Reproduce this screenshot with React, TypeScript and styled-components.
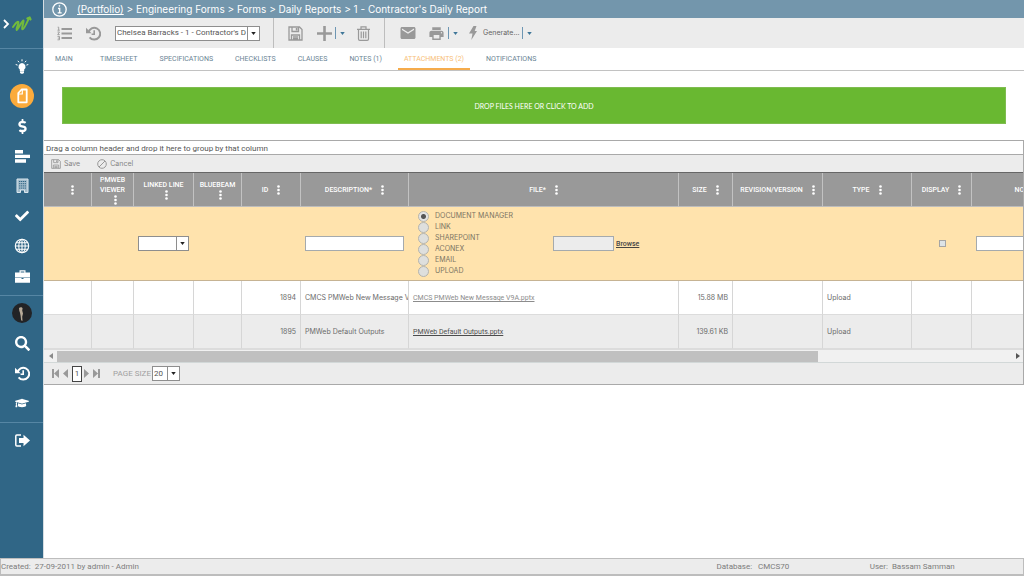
import React from "react";
import styled, { createGlobalStyle, css } from "styled-components";
import { MdEmail, MdPrint } from "react-icons/md";
import {
  FaCheck,
  FaDollarSign,
  FaGraduationCap,
  FaSearch,
} from "react-icons/fa";

const GlobalStyle = createGlobalStyle`
  *, *::before, *::after { box-sizing: border-box; }
  body {
    margin: 0;
    background: #fff;
    color: #6b6b6b;
    font-family: Roboto, "Liberation Sans", sans-serif;
    font-size: 8px;
    line-height: 10px;
  }
  button, input, select { font: inherit; color: inherit; }
  button { border: 0; padding: 0; background: none; cursor: pointer; }
  a { color: inherit; }
  svg { display: block; flex: none; }
`;

/* ---------- page frame ---------- */

const Page = styled.div`
  display: flex;
  flex-direction: column;
  min-height: 100vh;
`;

const Body = styled.div`
  display: flex;
  flex: 1;
`;

const Main = styled.main`
  flex: 1;
  min-width: 0;
  border-left: 1px solid #d5dde2;
`;

const Footer = styled.footer`
  display: flex;
  align-items: center;
  height: 18px;
  border: 1px solid #bdbdbd;
  border-bottom-width: 2px;
  background: #ececec;
  color: #7c7c7c;
`;

const FooterDatabase = styled.span`
  margin-left: auto;
  width: 15%;
  white-space: pre;
`;

const FooterUser = styled.span`
  width: 15%;
  white-space: pre;
`;

/* ---------- sidebar ---------- */

const Sidebar = styled.nav`
  width: 43px;
  flex: none;
  background: #306686;
  color: #fff;
`;

const Brand = styled.a`
  display: flex;
  align-items: center;
  height: 49px;
  padding-left: 3px;
  border-bottom: 1px solid #5686a4;
`;

const NavGroup = styled.div`
  padding: 2px 0 4px;
  border-bottom: 1px solid #5686a4;

  &:last-child { border-bottom: 0; }
`;

const NavLink = styled.a`
  display: flex;
  align-items: center;
  justify-content: center;
  height: 30px;
  padding-left: 1px;
  color: #fff;
`;

const ActiveDot = styled.span`
  display: flex;
  align-items: center;
  justify-content: center;
  width: 24px;
  height: 24px;
  border-radius: 50%;
  background: #fbab3c;
`;

/* ---------- title, toolbar, tabs ---------- */

const TitleBar = styled.header`
  display: flex;
  align-items: center;
  gap: 9px;
  height: 18px;
  padding-left: 7px;
  background: #7396ac;
  color: #fff;
`;

const Title = styled.h1`
  margin: 0;
  font-family: Inter, sans-serif;
  font-size: 10px;
  line-height: 14px;
  font-weight: 400;
`;

const Toolbar = styled.div`
  display: flex;
  height: 30px;
  background: #ececec;
  color: #999;
`;

const ToolGroup = styled.div<{ $pad: number; $gap: number }>`
  display: flex;
  align-items: center;
  gap: ${(p) => p.$gap}px;
  padding: 0 ${(p) => p.$pad}px;
  border-right: 1px solid #bdbdbd;

  &:last-child { border-right: 0; }
`;

const ToolButton = styled.button`
  display: flex;
  align-items: center;
  gap: 3px;
  color: #999;
`;

const ToolLabel = styled.span`
  padding-left: 3px;
  color: #666;
  font-family: Inter, sans-serif;
  font-size: 7px;
`;

const CommandLabel = styled.span`
  font-family: Inter, sans-serif;
  font-size: 7px;
  color: #858585;
`;

const SplitArrow = styled.span`
  display: flex;
  align-items: center;
  height: 12px;
  padding-left: 4px;
  border-left: 1px solid #6d96b3;
  color: #3f7698;
`;

const TabBar = styled.nav`
  display: flex;
  gap: 10px;
  height: 23px;
  padding-left: 5px;
  border-bottom: 1px solid #c2c2c2;
`;

const Tab = styled.a<{ $active?: boolean }>`
  display: flex;
  align-items: center;
  min-width: 35px;
  height: 22px;
  padding: 1px 6px 0;
  border-bottom: 2px solid ${(p) => (p.$active ? "#f5ab4b" : "transparent")};
  color: ${(p) => (p.$active ? "#f8c078" : "#6a8394")};
  font-size: 7px;
  text-decoration: none;
  white-space: nowrap;
`;

const DropZone = styled.button`
  display: block;
  width: calc(100% - 36px);
  height: 37px;
  margin: 16px 18px;
  border: 1px solid #7fbc50;
  background: #69b831;
  color: #fff;
  font-family: Lato, sans-serif;
  font-size: 7px;
`;

/* ---------- form controls ---------- */

const ComboBox = styled.span<{ $width: number }>`
  display: inline-flex;
  width: ${(p) => p.$width}px;
  height: 15px;
  border: 1px solid #8e8e8e;
  background: #fff;
  color: #555;
  vertical-align: middle;
`;

const ComboSelect = styled.select`
  appearance: none;
  flex: 1;
  min-width: 0;
  padding: 0 1px;
  border: 0;
  background: transparent;
  text-overflow: clip;
`;

const ComboArrow = styled.span`
  display: flex;
  align-items: center;
  justify-content: center;
  width: 12px;
  border-left: 1px solid #8e8e8e;
  color: #222;
  pointer-events: none;
`;

const TextInput = styled.input`
  display: block;
  width: 100%;
  height: 15px;
  padding: 0 2px;
  border: 1px solid #a5aaad;
  background: #fff;

  &:read-only { flex: none; width: 61px; background: #ececec; }
`;

const RadioLabel = styled.label`
  display: flex;
  align-items: center;
  gap: 6px;
  height: 11px;
  color: #7b7462;
  font-family: Inter, sans-serif;
  font-size: 7px;
`;

const Radio = styled.input`
  appearance: none;
  width: 11px;
  height: 11px;
  margin: 0;
  border: 1px solid #b4b4ae;
  border-radius: 50%;
  background: #dedfdd;

  &:checked {
    background: radial-gradient(circle, #555 0 2px, #e3e3e3 3px);
  }
`;

const Tick = styled.input`
  appearance: none;
  display: block;
  width: 7px;
  height: 7px;
  margin: 0 0 0 23px;
  border: 1px solid #a5a5a5;
  background: #dde3e6;
`;

const FileEditor = styled.div`
  display: flex;
  align-items: center;
`;

const RadioList = styled.div`
  flex: none;
  width: 140px;
  padding-left: 5px;
`;

const Browse = styled.a`
  margin-left: 2px;
  color: #444;
  font-size: 7px;
  font-weight: 500;
`;

/* ---------- grid ---------- */

const Grid = styled.section`
  border: 1px solid #a9a9a9;
  border-left: 0;
  background: #ececec;
`;

const GroupPanel = styled.div`
  height: 14px;
  padding: 3px 2px 0;
  border-bottom: 1px solid #a9a9a9;
  background: #fff;
  color: #555;
`;

const CommandBar = styled.div`
  display: flex;
  align-items: center;
  gap: 17px;
  height: 17px;
  padding-left: 7px;
`;

const Viewport = styled.div`
  overflow: hidden;
  border-top: 1px solid #666;
`;

const Table = styled.table`
  width: 1285px;
  table-layout: fixed;
  border-collapse: separate;
  border-spacing: 0;
`;

const HeadCell = styled.th`
  height: 34px;
  padding: 1px 0 0;
  border-right: 1px solid #c2c2c2;
  border-bottom: 1px solid #bdbdbd;
  background: #999;
  color: #fff;
  font-size: 7px;
  font-weight: 500;
`;

const HeadContent = styled.div<{ $stacked?: boolean }>`
  display: flex;
  align-items: center;
  justify-content: center;
  gap: 9px;

  ${(p) =>
    p.$stacked &&
    css`
      flex-direction: column;
      gap: 0;
      svg { margin-left: 5px; }
    `}
`;

const Cell = styled.td<{ $right?: boolean }>`
  height: 34px;
  padding: 1px 4px 0;
  overflow: hidden;
  border-right: 1px solid #d6d6d6;
  font-family: Inter, sans-serif;
  font-size: 7px;
  text-align: ${(p) => (p.$right ? "right" : "left")};
  text-overflow: clip;
  white-space: nowrap;
`;

const EditCell = styled.td`
  height: 74px;
  padding: 0 5px 0 4px;
  border-bottom: 1px solid #c6b393;
  background: #ffe3ad;
`;

const Row = styled.tr<{ $alt?: boolean }>`
  background: ${(p) => (p.$alt ? "#ececec" : "#fff")};

  td { border-bottom: 1px solid #dcdcdc; }
`;

const FileLink = styled.a<{ $visited?: boolean }>`
  color: ${(p) => (p.$visited ? "#8c8c8c" : "#4c4c4c")};
  font-family: Roboto, sans-serif;
`;

const ScrollTrack = styled.div`
  display: flex;
  align-items: center;
  height: 14px;
  padding-right: 3px;
  border-top: 1px solid #dcdcdc;
  border-bottom: 1px solid #d2d8d8;
  background: #f1f1f1;
  color: #555;
`;

const ScrollButton = styled.button`
  display: flex;
  align-items: center;
  justify-content: center;
  width: 13px;
  color: #8a8a8a;
`;

const ScrollThumb = styled.div`
  width: 78%;
  height: 11px;
  margin-right: auto;
  background: #c0c0c0;
`;

const Pager = styled.div`
  display: flex;
  align-items: center;
  height: 21px;
  padding-left: 8px;
  color: #a0a0a0;
`;

const PagerButton = styled.button`
  display: flex;
  padding-right: 4px;
  color: #999;
`;

const CurrentPage = styled.button`
  width: 10px;
  height: 16px;
  margin-right: 2px;
  border: 1px solid #444;
  background: #fff;
  color: #555;
`;

const PageSize = styled.label`
  display: flex;
  align-items: center;
  gap: 1px;
  margin-left: 9px;
`;

/* ---------- icons ---------- */

const Caret = ({ size = 5 }: { size?: number }) => (
  <svg width={size} height="3" viewBox="0 0 6 4" fill="currentColor">
    <path d="M0 0h6L3 4z" />
  </svg>
);

const Dots = () => (
  <svg width="3" height="10" viewBox="0 0 3 10" fill="currentColor">
    <circle cx="1.500" cy="1.500" r="1.300" />
    <circle cx="1.500" cy="5" r="1.300" />
    <circle cx="1.500" cy="8.500" r="1.300" />
  </svg>
);

const Logo = () => (
  <svg width="31" height="20" viewBox="0 0 31 20" fill="none">
    <path d="M1 6l4 4-4 4" stroke="#fff" strokeWidth="1.8" />
    <path
      d="M10 13c2.500-3.500 4.500-6 5.400-5 .7 1-2.800 7.500-1.700 8 1.100.4 5.200-9.800 6.800-9.500 1 .3-2.500 8.300-1.200 8.800 1.900.3 5-7.500 6.700-11.300M24.300 4.300l2.400-1 .9 2.200"
      stroke="#72bb3c"
      strokeWidth="2"
      strokeLinecap="round"
      strokeLinejoin="round"
    />
  </svg>
);

const InfoIcon = () => (
  <svg width="17" height="17" viewBox="0 0 17 17" fill="none" stroke="#fff">
    <circle cx="8.500" cy="8.500" r="6.700" strokeWidth="1.300" />
    <path d="M7 7.500h1.700v4M6.700 11.800h4" strokeWidth="1.300" />
    <circle cx="8.400" cy="4.900" r=".5" />
  </svg>
);

const BulbIcon = () => (
  <svg width="14" height="15" viewBox="0 0 14 15" fill="#fff">
    <path d="M7 4a3.600 3.600 0 0 0-2.200 6.400V12h4.400v-1.600A3.600 3.600 0 0 0 7 4zM5 12.300h4v1.400l-1 1H6l-1-1z" />
    <path
      d="M7 .3v2M2.800 1.800l1.300 1.500M11.200 1.800L9.900 3.300M.7 5.500l1.900.6M13.300 5.500l-1.900.6"
      stroke="#fff"
      strokeWidth="1"
    />
  </svg>
);

const FormIcon = () => (
  <svg width="11" height="16" viewBox="0 0 11 16" fill="none">
    <path
      d="M4.600 1.500H9.700v12.800H1.300V5z"
      stroke="#fff"
      strokeWidth="1.800"
      strokeLinejoin="round"
    />
    <path d="M1.300 6h4V1.300" stroke="#fff" strokeWidth="1.200" />
  </svg>
);

const BarsIcon = () => (
  <svg width="15" height="13" viewBox="0 0 15 13" fill="#fff">
    <path d="M0 0h8v3.500H0zM0 4.700h15v3.300H0zM0 9.200h11v3.500H0z" />
  </svg>
);

const BuildingIcon = () => (
  <svg width="13" height="16" viewBox="0 0 13 16">
    <path d="M1 1h11v13.500H8.500V12h-4v2.500H1z" fill="#a3bccb" stroke="#dbe7ee" />
    <path
      d="M3 3.500h7M3 5.700h7M3 7.900h7M3 10.100h7"
      stroke="#306686"
      strokeWidth="1"
      strokeDasharray="1.300 .6"
    />
  </svg>
);

const GlobeIcon = () => (
  <svg width="16" height="16" viewBox="0 0 16 16" fill="none" stroke="#fff" strokeWidth="1.100">
    <circle cx="8" cy="8" r="6.700" />
    <ellipse cx="8" cy="8" rx="3.200" ry="6.700" />
    <path d="M8 1.300v13.400M1.300 8h13.400M2.300 4.700h11.400M2.300 11.300h11.400" />
  </svg>
);

const CaseIcon = () => (
  <svg width="15" height="13" viewBox="0 0 15 13" fill="#fff">
    <path
      fillRule="evenodd"
      d="M4.500 2.500V.3h6v2.200H15v5H0v-5zM5.700 2.500h3.600V1.400H5.700zM0 8h6.500v1h2V8H15v4.700H0z"
    />
  </svg>
);

const Avatar = () => (
  <svg width="20" height="20" viewBox="0 0 20 20">
    <circle cx="10" cy="10" r="10" fill="#222326" />
    <path
      d="M7 5c1.200-1.300 3.300-1 3.600.3l-.4 2.200.8 3-.8 3.200.3 4.300-1.400-.8-.5-4.400-.6-3-.7-2z"
      fill="#b8aa98"
    />
  </svg>
);

const ExitIcon = () => (
  <svg width="15" height="13" viewBox="0 0 15 13">
    <path d="M6 1H1.800q-1 0-1 1v9q0 1 1 1H6" fill="none" stroke="#fff" strokeWidth="1.500" />
    <path d="M4 4h4.500V.8L15 6.500l-6.500 5.700V9H4z" fill="#fff" />
  </svg>
);

const ListIcon = () => (
  <svg width="15" height="15" viewBox="0 0 15 15" fill="none" stroke="currentColor">
    <path d="M4.500 3H15M4.500 7.500H15M4.500 12H15" strokeWidth="2" />
    <path
      d="M.7 1.200h1v3M.5 4.200h2.300M.5 6h2L.7 8.600h2M.5 10.400h2v3.400h-2M.8 12.100h1.700"
      strokeWidth=".9"
    />
  </svg>
);

const HistoryIcon = () => (
  <svg width="15" height="15" viewBox="0 0 15 15" fill="none" stroke="currentColor">
    <path d="M2.500 6.500A5.900 5.900 0 1 1 3.600 11.300" strokeWidth="2" />
    <path d="M0 1.800v5.400h5.600z" fill="currentColor" stroke="none" />
    <path d="M8.200 4.300v4H5.600" strokeWidth="1.600" />
  </svg>
);

const SaveIcon = ({ size = 15 }: { size?: number }) => (
  <svg width={size} height={size} viewBox="0 0 15 15" fill="none" stroke="#999" strokeWidth="1.300">
    <path d="M1 1h10.500L14 3.500V14H1zM4 1v4.500h6.500V1M3.500 14V9h8v5M5 11h5M5 12.700h5" />
    <path d="M7.800 2h1.700v2.500H7.800z" fill="#999" stroke="none" />
  </svg>
);

const PlusIcon = () => (
  <svg width="17" height="15" viewBox="-2 0 17 15" fill="#999">
    <path d="M6.200 0h2.600v6.200H15v2.600H8.800V15H6.200V8.800H0V6.200h6.200z" />
  </svg>
);

const TrashIcon = () => (
  <svg width="13" height="15" viewBox="0 0 13 15" fill="none" stroke="#999" strokeWidth="1.200">
    <path d="M0 3.300h13M4 3V.8h5V3M1.500 3.500V13q0 1.300 1.300 1.300h7.400q1.300 0 1.300-1.300V3.500M4.200 5.500v6.800M6.500 5.500v6.800M8.800 5.500v6.800" />
  </svg>
);

const BoltIcon = () => (
  <svg width="8" height="14" viewBox="0 0 8 14" fill="#999">
    <path d="M4.500 0h3L5.700 5H8L2.300 14l1.200-6.500H0z" />
  </svg>
);

const CancelIcon = () => (
  <svg width="10" height="10" viewBox="0 0 10 10" fill="none" stroke="#999">
    <circle cx="5" cy="5" r="4.300" />
    <path d="M2 8l6-6" />
  </svg>
);

const Triangle = ({ back, edge }: { back?: boolean; edge?: boolean }) => (
  <svg
    width={edge ? 7 : 5}
    height="9"
    viewBox={edge ? "0 0 7 9" : "0 0 5 9"}
    fill="currentColor"
  >
    {back ? (
      <path d={edge ? "M0 0h2v9H0zM7 0v9L2 4.500z" : "M5 0v9L0 4.500z"} />
    ) : (
      <path d={edge ? "M5 0H7v9H5zM0 0v9l5-4.500z" : "M0 0v9l5-4.500z"} />
    )}
  </svg>
);

const ScrollArrow = ({ back }: { back?: boolean }) => (
  <svg width="4" height="6" viewBox="0 0 4 6" fill="currentColor">
    <path d={back ? "M4 0v6L0 3z" : "M0 0v6l4-3z"} />
  </svg>
);

/* ---------- data ---------- */

type NavItem = { label: string; icon: React.ReactNode };

const navGroups: NavItem[][] = [
  [
    { label: "Ideas", icon: <BulbIcon /> },
    { label: "Forms", icon: <ActiveDot><FormIcon /></ActiveDot> },
    { label: "Costs", icon: <FaDollarSign size={15} /> },
    { label: "Schedules", icon: <BarsIcon /> },
    { label: "Assets", icon: <BuildingIcon /> },
    { label: "Workflow", icon: <FaCheck size={14} /> },
    { label: "Portals", icon: <GlobeIcon /> },
    { label: "Toolbox", icon: <CaseIcon /> },
  ],
  [
    { label: "Profile", icon: <Avatar /> },
    { label: "Search", icon: <FaSearch size={15} /> },
    { label: "Recent", icon: <HistoryIcon /> },
    { label: "Training", icon: <FaGraduationCap size={14} /> },
  ],
  [{ label: "Sign out", icon: <ExitIcon /> }],
];

const tabs = [
  "MAIN",
  "TIMESHEET",
  "SPECIFICATIONS",
  "CHECKLISTS",
  "CLAUSES",
  "NOTES (1)",
  "ATTACHMENTS (2)",
  "NOTIFICATIONS",
];

const columns: { label: string; width: number; stacked?: boolean }[] = [
  { label: "", width: 48 },
  { label: "PMWEB VIEWER", width: 42, stacked: true },
  { label: "LINKED LINE", width: 60, stacked: true },
  { label: "BLUEBEAM", width: 48, stacked: true },
  { label: "ID", width: 59 },
  { label: "DESCRIPTION*", width: 108 },
  { label: "FILE*", width: 270 },
  { label: "SIZE", width: 54 },
  { label: "REVISION/VERSION", width: 90 },
  { label: "TYPE", width: 89 },
  { label: "DISPLAY", width: 60 },
  { label: "NOTES", width: 120 },
  { label: "", width: 237 },
];

const files = [
  {
    id: "1894",
    description: "CMCS PMWeb New Message V9A",
    file: "CMCS PMWeb New Message V9A.pptx",
    size: "15.88 MB",
  },
  {
    id: "1895",
    description: "PMWeb Default Outputs",
    file: "PMWeb Default Outputs.pptx",
    size: "139.61 KB",
  },
];

const sources = ["DOCUMENT MANAGER", "LINK", "SHAREPOINT", "ACONEX", "EMAIL", "UPLOAD"];

function Combo({ label, width, value = "", id }: { label: string; width: number; value?: string; id?: string }) {
  return (
    <ComboBox $width={width}>
      <ComboSelect aria-label={label} id={id} defaultValue={value}>
        <option value={value}>{value}</option>
      </ComboSelect>
      <ComboArrow>
        <Caret />
      </ComboArrow>
    </ComboBox>
  );
}

function RecordToolbar() {
  return (
    <Toolbar>
      <ToolGroup $pad={13} $gap={14}>
        <ToolButton aria-label="List"><ListIcon /></ToolButton>
        <ToolButton aria-label="History"><HistoryIcon /></ToolButton>
        <Combo label="Record" width={145} value="Chelsea Barracks - 1 - Contractor's Daily Report" />
      </ToolGroup>
      <ToolGroup $pad={14} $gap={12}>
        <ToolButton aria-label="Save record"><SaveIcon /></ToolButton>
        <ToolButton aria-label="Add"><PlusIcon /><SplitArrow><Caret /></SplitArrow></ToolButton>
        <ToolButton aria-label="Delete"><TrashIcon /></ToolButton>
      </ToolGroup>
      <ToolGroup $pad={14} $gap={11}>
        <ToolButton aria-label="Email"><MdEmail size={18} /></ToolButton>
        <ToolButton aria-label="Print"><MdPrint size={17} /><SplitArrow><Caret /></SplitArrow></ToolButton>
        <ToolButton>
          <BoltIcon />
          <ToolLabel>Generate...</ToolLabel>
          <SplitArrow><Caret /></SplitArrow>
        </ToolButton>
      </ToolGroup>
    </Toolbar>
  );
}

function AttachmentTable() {
  return (
    <Table>
      <colgroup>
        {columns.map((c, i) => (
          <col key={i} width={c.width} />
        ))}
      </colgroup>
      <thead>
        <tr>
          {columns.map((c, i) => (
            <HeadCell key={i} scope="col">
              <HeadContent $stacked={c.stacked}>
                <span>{c.label}</span>
                <Dots />
              </HeadContent>
            </HeadCell>
          ))}
        </tr>
      </thead>
      <tbody>
        <tr>
          <EditCell colSpan={2} />
          <EditCell><Combo label="Linked line" width={51} /></EditCell>
          <EditCell colSpan={2} />
          <EditCell><TextInput aria-label="Description" /></EditCell>
          <EditCell>
            <FileEditor>
              <RadioList>
                {sources.map((s, i) => (
                  <RadioLabel key={s}>
                    <Radio type="radio" name="source" defaultChecked={i === 0} />
                    {s}
                  </RadioLabel>
                ))}
              </RadioList>
              <TextInput aria-label="Selected file" readOnly />
              <Browse href="#browse">Browse</Browse>
            </FileEditor>
          </EditCell>
          <EditCell colSpan={3} />
          <EditCell><Tick type="checkbox" aria-label="Display" /></EditCell>
          <EditCell><TextInput aria-label="Notes" /></EditCell>
          <EditCell />
        </tr>
        {files.map((f, i) => (
          <Row key={f.id} $alt={i % 2 === 1}>
            <Cell />
            <Cell />
            <Cell />
            <Cell />
            <Cell $right>{f.id}</Cell>
            <Cell>{f.description}</Cell>
            <Cell>
              <FileLink href="#file" $visited={i === 0}>{f.file}</FileLink>
            </Cell>
            <Cell $right>{f.size}</Cell>
            <Cell />
            <Cell>Upload</Cell>
            <Cell />
            <Cell />
            <Cell />
          </Row>
        ))}
      </tbody>
    </Table>
  );
}

export default function App() {
  return (
    <Page>
      <GlobalStyle />
      <Body>
        <Sidebar aria-label="Modules">
          <Brand href="#home" aria-label="Home"><Logo /></Brand>
          {navGroups.map((group, i) => (
            <NavGroup key={i}>
              {group.map((item) => (
                <NavLink key={item.label} href="#module" aria-label={item.label}>
                  {item.icon}
                </NavLink>
              ))}
            </NavGroup>
          ))}
        </Sidebar>
        <Main>
          <TitleBar>
            <InfoIcon />
            <Title>
              <a href="#portfolio">(Portfolio)</a> &gt; Engineering Forms &gt; Forms &gt; Daily
              Reports &gt; 1 - Contractor's Daily Report
            </Title>
          </TitleBar>
          <RecordToolbar />
          <TabBar aria-label="Record sections">
            {tabs.map((t) => (
              <Tab key={t} href="#tab" $active={t.startsWith("ATTACH")}>{t}</Tab>
            ))}
          </TabBar>
          <DropZone>DROP FILES HERE OR CLICK TO ADD</DropZone>
          <Grid>
            <GroupPanel>Drag a column header and drop it here to group by that column</GroupPanel>
            <CommandBar>
              <ToolButton><SaveIcon size={10} /><CommandLabel>Save</CommandLabel></ToolButton>
              <ToolButton><CancelIcon /><CommandLabel>Cancel</CommandLabel></ToolButton>
            </CommandBar>
            <Viewport>
              <AttachmentTable />
            </Viewport>
            <ScrollTrack>
              <ScrollButton aria-label="Scroll left"><ScrollArrow back /></ScrollButton>
              <ScrollThumb />
              <ScrollArrow />
            </ScrollTrack>
            <Pager>
              <PagerButton aria-label="First page"><Triangle back edge /></PagerButton>
              <PagerButton aria-label="Previous page"><Triangle back /></PagerButton>
              <CurrentPage>1</CurrentPage>
              <PagerButton aria-label="Next page"><Triangle /></PagerButton>
              <PagerButton aria-label="Last page"><Triangle edge /></PagerButton>
              <PageSize htmlFor="page-size">
                PAGE SIZE
                <Combo id="page-size" label="Page size" width={28} value="20" />
              </PageSize>
            </Pager>
          </Grid>
        </Main>
      </Body>
      <Footer>
        <span>Created:&nbsp; 27-09-2011 by admin - Admin</span>
        <FooterDatabase>{"Database:   CMCS70"}</FooterDatabase>
        <FooterUser>{"User:  Bassam Samman"}</FooterUser>
      </Footer>
    </Page>
  );
}
